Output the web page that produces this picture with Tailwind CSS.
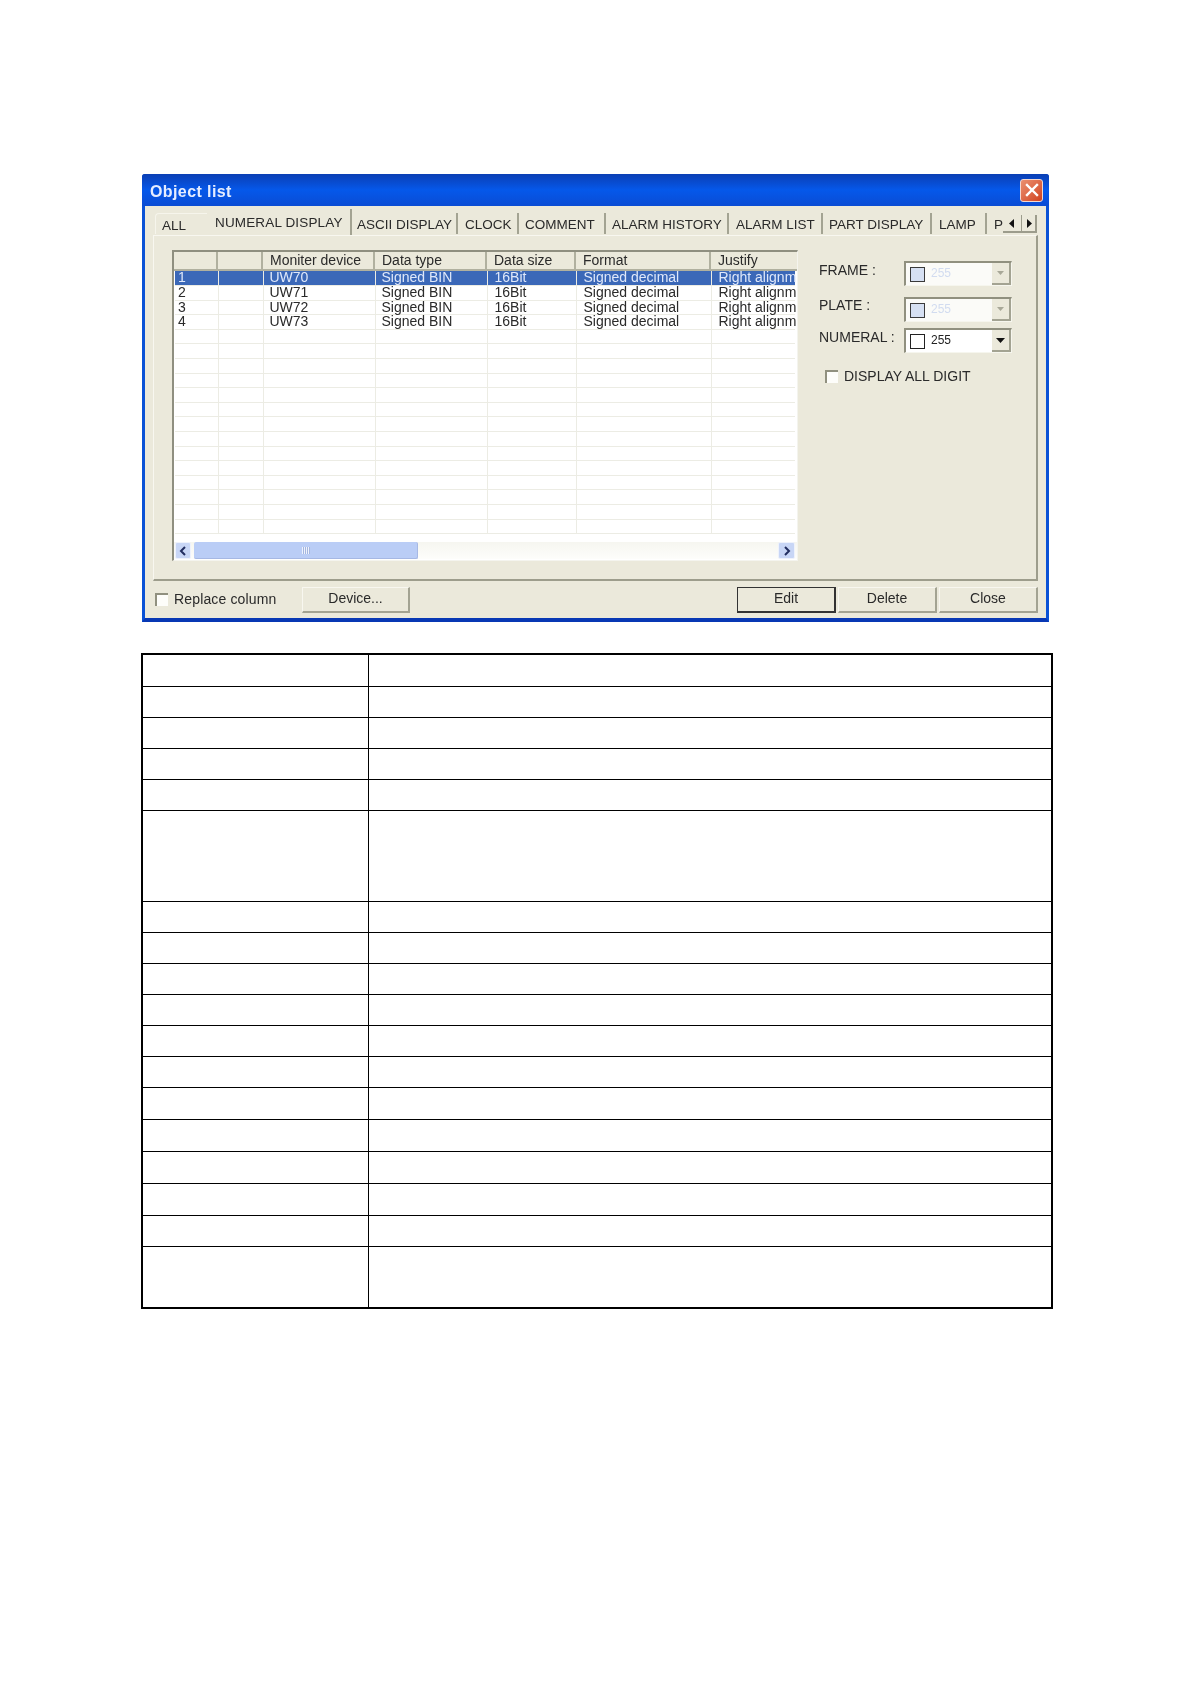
<!DOCTYPE html>
<html lang="en">
<head>
    <meta charset="UTF-8">
    <title>Object list</title>
    <script src="https://cdn.jsdelivr.net/npm/@tailwindcss/browser@4"></script>
</head>
<body class="bg-white font-['Liberation_Sans',Arial,sans-serif] text-[14px] text-[#2a2a2a]">
    <main class="ml-[142px] pt-[174px] w-[912px]">
        <!-- Dialog -->
        <section class="w-[907px] h-[448px] flex flex-col bg-[#ebe9db] border-x-[3px] border-b-[4px] border-x-[#0a52d6] border-b-[#0838b4] rounded-t-[3px] blur-[0.35px]">
            <!-- Title bar -->
            <header class="-mx-[3px] h-[32px] shrink-0 flex items-center justify-between pl-[8px] pr-[6px] rounded-t-[3px] bg-gradient-to-b from-[#0a3fb4] via-[#0558ea] to-[#0a4cd4]">
                <h1 class="pt-[4px] font-bold text-[16px] tracking-[0.4px] text-[#e6edff] leading-none">Object list</h1>
                <button class="w-[23px] h-[23px] flex items-center justify-center rounded-[3px] border border-[#f4d8d0] bg-gradient-to-br from-[#ea9070] to-[#d0401c]">
                    <svg class="w-[14px] h-[14px]" viewBox="0 0 14 14"><path d="M2 2l10 10M12 2L2 12" stroke="#fff" stroke-width="2.4" stroke-linecap="square"/></svg>
                </button>
            </header>

            <div class="flex-1 px-[8px] flex flex-col">
                <!-- Tabs -->
                <nav class="h-[29px] shrink-0 flex items-end text-[13.5px] whitespace-nowrap leading-[23px] [&>a]:h-[21px] [&>a]:mb-[1px]">
                    <a class="w-[52px] ml-[2px] pl-[6px] border-t border-l border-[#f6f5ec] rounded-tl-[4px]">ALL</a>
                    <a class="w-[145px] !h-[26px] !mb-0 pl-[8px] border-r-2 border-[#a3a392] bg-[#ebe9db] leading-[28px] tracking-[0.15px]">NUMERAL DISPLAY</a>
                    <a class="w-[106px] pl-[5px] border-r-2 border-[#a3a392]">ASCII DISPLAY</a>
                    <a class="w-[61px] pl-[7px] border-r-2 border-[#a3a392]">CLOCK</a>
                    <a class="w-[87px] pl-[6px] border-r-2 border-[#a3a392]">COMMENT</a>
                    <a class="w-[123px] pl-[6px] border-r-2 border-[#a3a392]">ALARM HISTORY</a>
                    <a class="w-[94px] pl-[7px] border-r-2 border-[#a3a392]">ALARM LIST</a>
                    <a class="w-[109px] pl-[6px] border-r-2 border-[#a3a392]">PART DISPLAY</a>
                    <a class="w-[55px] pl-[7px] border-r-2 border-[#a3a392]">LAMP</a>
                    <a class="w-[17px] pl-[7px] overflow-hidden">P</a>
                    <div class="flex self-end mb-[2px] -ml-[1px]">
                        <button class="w-[19px] h-[18px] flex items-center justify-center border-b-2 border-r border-[#9c9c8c] bg-[#ebe9db]"><svg class="w-[6px] h-[9px]" viewBox="0 0 6 9"><path d="M5 0v9L0 4.5z" fill="#111"/></svg></button>
                        <button class="w-[15px] h-[18px] flex items-center justify-center border-b-2 border-r-2 border-[#9c9c8c] bg-[#ebe9db]"><svg class="w-[6px] h-[9px]" viewBox="0 0 6 9"><path d="M1 0v9l5-4.5z" fill="#111"/></svg></button>
                    </div>
                </nav>

                <!-- Tab panel -->
                <div class="h-[346px] shrink-0 flex pl-[18px] pt-[14px] border-t border-l border-[#f8f7f0] border-r-2 border-b-2 border-r-[#9d9d8c] border-b-[#9d9d8c]">
                    <!-- List -->
                    <div class="w-[626px] h-[311px] flex flex-col bg-white border-t-2 border-l-2 border-[#8f8f80] border-r border-b border-r-[#f4f4ee] border-b-[#f4f4ee]">
                        <div class="h-[19px] shrink-0 grid grid-cols-[44px_45px_112px_112px_89px_135px_1fr] bg-[#ebe9db] border-b-2 border-[#b0b09f] whitespace-nowrap leading-[17px] [&>div]:border-r-2 [&>div]:border-[#b0b09f] [&>div]:pl-[7px]">
                            <div></div><div></div><div>Moniter device</div><div>Data type</div><div>Data size</div><div>Format</div><div class="!border-r-0">Justify</div>
                        </div>
                        <div class="flex-1 overflow-hidden pl-[1px]">
                            <table class="w-[620px] table-fixed border-collapse leading-[12px] [&_td]:h-[14.6px] [&_td]:p-0 [&_td]:pl-[3px] [&_td]:align-top [&_td]:whitespace-nowrap [&_td]:border-r [&_td]:border-b [&_td]:border-[#ecece4]">
                                <colgroup><col class="w-[43px]"><col class="w-[45px]"><col class="w-[112px]"><col class="w-[112px]"><col class="w-[89px]"><col class="w-[135px]"><col></colgroup>
                                <tbody>
                                    <tr class="bg-[#3b68b8] text-[#dfe8fa]"><td>1</td><td></td><td class="!pl-[6px]">UW70</td><td class="!pl-[6px]">Signed BIN</td><td class="!pl-[7px]">16Bit</td><td class="!pl-[7px]">Signed decimal</td><td class="!pl-[7px] !border-r-0">Right alignm</td></tr>
                                    <tr><td>2</td><td></td><td class="!pl-[6px]">UW71</td><td class="!pl-[6px]">Signed BIN</td><td class="!pl-[7px]">16Bit</td><td class="!pl-[7px]">Signed decimal</td><td class="!pl-[7px] !border-r-0">Right alignm</td></tr>
                                    <tr><td>3</td><td></td><td class="!pl-[6px]">UW72</td><td class="!pl-[6px]">Signed BIN</td><td class="!pl-[7px]">16Bit</td><td class="!pl-[7px]">Signed decimal</td><td class="!pl-[7px] !border-r-0">Right alignm</td></tr>
                                    <tr><td>4</td><td></td><td class="!pl-[6px]">UW73</td><td class="!pl-[6px]">Signed BIN</td><td class="!pl-[7px]">16Bit</td><td class="!pl-[7px]">Signed decimal</td><td class="!pl-[7px] !border-r-0">Right alignm</td></tr>
                                    <tr><td></td><td></td><td></td><td></td><td></td><td></td><td class="!border-r-0"></td></tr>
                                    <tr><td></td><td></td><td></td><td></td><td></td><td></td><td class="!border-r-0"></td></tr>
                                    <tr><td></td><td></td><td></td><td></td><td></td><td></td><td class="!border-r-0"></td></tr>
                                    <tr><td></td><td></td><td></td><td></td><td></td><td></td><td class="!border-r-0"></td></tr>
                                    <tr><td></td><td></td><td></td><td></td><td></td><td></td><td class="!border-r-0"></td></tr>
                                    <tr><td></td><td></td><td></td><td></td><td></td><td></td><td class="!border-r-0"></td></tr>
                                    <tr><td></td><td></td><td></td><td></td><td></td><td></td><td class="!border-r-0"></td></tr>
                                    <tr><td></td><td></td><td></td><td></td><td></td><td></td><td class="!border-r-0"></td></tr>
                                    <tr><td></td><td></td><td></td><td></td><td></td><td></td><td class="!border-r-0"></td></tr>
                                    <tr><td></td><td></td><td></td><td></td><td></td><td></td><td class="!border-r-0"></td></tr>
                                    <tr><td></td><td></td><td></td><td></td><td></td><td></td><td class="!border-r-0"></td></tr>
                                    <tr><td></td><td></td><td></td><td></td><td></td><td></td><td class="!border-r-0"></td></tr>
                                    <tr><td></td><td></td><td></td><td></td><td></td><td></td><td class="!border-r-0"></td></tr>
                                    <tr><td></td><td></td><td></td><td></td><td></td><td></td><td class="!border-r-0"></td></tr>
                                </tbody>
                            </table>
                        </div>
                        <!-- Horizontal scrollbar -->
                        <div class="h-[17px] shrink-0 mb-[1px] flex items-stretch pl-[1px] pr-[2px] bg-gradient-to-b from-[#f6f6f0] to-[#fdfdfb]">
                            <button class="w-[16px] flex items-center justify-center rounded-[2px] bg-[#c8d6f6] border border-[#eef2fc]"><svg class="w-[8px] h-[10px]" viewBox="0 0 8 10"><path d="M6 1L2 5l4 4" fill="none" stroke="#222e60" stroke-width="2"/></svg></button>
                            <div class="w-[224px] ml-[3px] flex items-center justify-center rounded-[2px] bg-[#bacdf6] border-b border-r border-[#a6b8e4]"><span class="w-[8px] h-[7px] bg-[repeating-linear-gradient(90deg,#eef2fc_0_1px,#a4b6e0_1px_2px)]"></span></div>
                            <div class="flex-1"></div>
                            <button class="w-[17px] flex items-center justify-center rounded-[2px] bg-[#c8d6f6] border border-[#eef2fc]"><svg class="w-[8px] h-[10px]" viewBox="0 0 8 10"><path d="M2 1l4 4-4 4" fill="none" stroke="#222e60" stroke-width="2"/></svg></button>
                        </div>
                    </div>

                    <!-- Colour options -->
                    <div class="ml-[21px] mt-[11px] flex flex-col">
                        <div class="flex items-start h-[25px] leading-[18px]">
                            <span class="w-[85px]">FRAME :</span>
                            <div class="w-[108px] h-[25px] flex border-t-2 border-l-2 border-[#90907f] border-r border-b border-r-[#f6f6ee] border-b-[#f6f6ee] bg-[#fbfbf8]">
                                <span class="w-[15px] h-[15px] ml-[4px] mt-[4px] border border-[#3a3a3a] bg-[#d6e0f2]"></span>
                                <span class="ml-[6px] text-[12px] leading-[20px] text-[#d2dcf0] flex-1">255</span>
                                <button class="w-[19px] flex items-center justify-center bg-[#ebe9db] border-r-2 border-b-2 border-[#a3a392]"><svg class="w-[7px] h-[4px]" viewBox="0 0 9 5"><path d="M0 0h9L4.5 5z" fill="#a8a898"/></svg></button>
                            </div>
                        </div>
                        <div class="flex items-start h-[25px] mt-[11px] leading-[16px]">
                            <span class="w-[85px]">PLATE :</span>
                            <div class="w-[108px] h-[25px] flex border-t-2 border-l-2 border-[#90907f] border-r border-b border-r-[#f6f6ee] border-b-[#f6f6ee] bg-[#fbfbf8]">
                                <span class="w-[15px] h-[15px] ml-[4px] mt-[4px] border border-[#3a3a3a] bg-[#d6e0f2]"></span>
                                <span class="ml-[6px] text-[12px] leading-[20px] text-[#d2dcf0] flex-1">255</span>
                                <button class="w-[19px] flex items-center justify-center bg-[#ebe9db] border-r-2 border-b-2 border-[#a3a392]"><svg class="w-[7px] h-[4px]" viewBox="0 0 9 5"><path d="M0 0h9L4.5 5z" fill="#a8a898"/></svg></button>
                            </div>
                        </div>
                        <div class="flex items-start h-[25px] mt-[6px] leading-[18px]">
                            <span class="w-[85px]">NUMERAL :</span>
                            <div class="w-[108px] h-[25px] flex border-t-2 border-l-2 border-[#90907f] border-r border-b border-r-[#f6f6ee] border-b-[#f6f6ee] bg-white">
                                <span class="w-[15px] h-[15px] ml-[4px] mt-[4px] border border-[#222] bg-white"></span>
                                <span class="ml-[6px] text-[12px] leading-[20px] text-[#222] flex-1">255</span>
                                <button class="w-[19px] flex items-center justify-center bg-[#ebe9db] border-r-2 border-b-2 border-[#a3a392]"><svg class="w-[9px] h-[5px]" viewBox="0 0 9 5"><path d="M0 0h9L4.5 5z" fill="#111"/></svg></button>
                            </div>
                        </div>
                        <label class="flex items-center mt-[17px] ml-[6px] leading-[13px]">
                            <span class="w-[13px] h-[13px] border-t-2 border-l-2 border-[#90907f] bg-[#fdfdfa]"></span>
                            <span class="ml-[6px]">DISPLAY ALL DIGIT</span>
                        </label>
                    </div>
                </div>

                <!-- Bottom buttons -->
                <div class="mt-[6px] flex items-start [&_button]:h-[26px] [&_button]:pb-[2px] [&_button]:bg-[#ebe9db] [&_button]:border-t [&_button]:border-l [&_button]:border-[#f8f7f0] [&_button]:border-r-2 [&_button]:border-b-2 [&_button]:border-r-[#a3a392] [&_button]:border-b-[#a3a392]">
                    <label class="flex items-center h-[26px] pb-[1px] ml-[2px] w-[147px]">
                        <span class="w-[13px] h-[13px] border-t-2 border-l-2 border-[#90907f] bg-[#fdfdfa]"></span>
                        <span class="ml-[6px] tracking-[0.15px]">Replace column</span>
                    </label>
                    <button class="w-[108px]">Device...</button>
                    <div class="ml-auto flex gap-[2px]">
                        <button class="w-[99px] !border !border-[#333] !border-r-2 !border-b-2">Edit</button>
                        <button class="w-[99px]">Delete</button>
                        <button class="w-[99px]">Close</button>
                    </div>
                </div>
            </div>
        </section>

        <!-- Description table, cells blank in the source -->
        <table class="mt-[31px] -ml-[1px] w-[912px] table-fixed border-collapse border-t-2 border-l-2 border-r-2 border-b-2 border-black [&_td]:border-b [&_td]:border-black [&_td:first-child]:w-[226px] [&_td:first-child]:border-r">
            <tbody>
                <tr class="h-[32px]"><td></td><td></td></tr>
                <tr class="h-[31px]"><td></td><td></td></tr>
                <tr class="h-[31px]"><td></td><td></td></tr>
                <tr class="h-[31px]"><td></td><td></td></tr>
                <tr class="h-[31px]"><td></td><td></td></tr>
                <tr class="h-[91px]"><td></td><td></td></tr>
                <tr class="h-[31px]"><td></td><td></td></tr>
                <tr class="h-[31px]"><td></td><td></td></tr>
                <tr class="h-[31px]"><td></td><td></td></tr>
                <tr class="h-[31px]"><td></td><td></td></tr>
                <tr class="h-[31px]"><td></td><td></td></tr>
                <tr class="h-[31px]"><td></td><td></td></tr>
                <tr class="h-[32px]"><td></td><td></td></tr>
                <tr class="h-[32px]"><td></td><td></td></tr>
                <tr class="h-[32px]"><td></td><td></td></tr>
                <tr class="h-[32px]"><td></td><td></td></tr>
                <tr class="h-[31px]"><td></td><td></td></tr>
                <tr class="h-[62px]"><td></td><td></td></tr>
            </tbody>
        </table>
    </main>
</body>
</html>
